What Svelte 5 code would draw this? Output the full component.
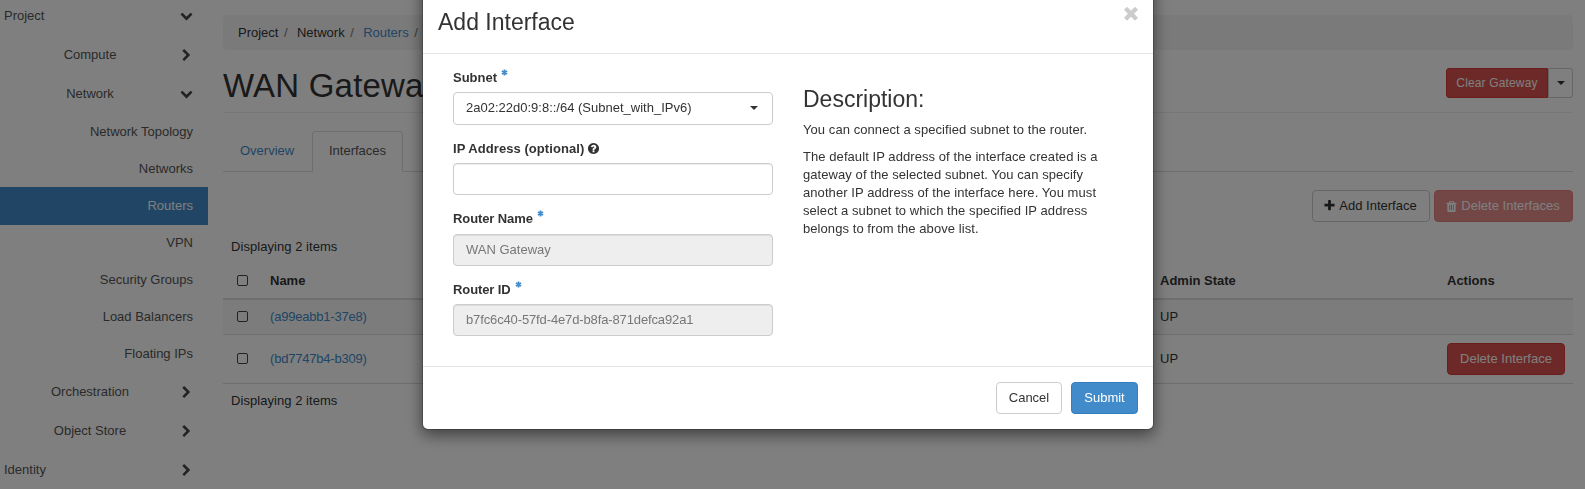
<script>
  const icons = {
    down: 'M1683 808l-742 741q-19 19-45 19t-45-19l-742-741q-19-19-19-45.5t19-45.5l166-165q19-19 45-19t45 19l531 531 531-531q19-19 45-19t45 19l166 165q19 19 19 45.5t-19 45.5z',
    right: 'M1363 877l-742 742q-19 19-45 19t-45-19l-166-166q-19-19-19-45t19-45l531-531-531-531q-19-19-19-45t19-45l166-166q19-19 45-19t45 19l742 742q19 19 19 45t-19 45z',
    times: 'M1490 1322q0 40-28 68l-136 136q-28 28-68 28t-68-28l-294-294-294 294q-28 28-68 28t-68-28l-136-136q-28-28-28-68t28-68l294-294-294-294q-28-28-28-68t28-68l136-136q28-28 68-28t68 28l294 294 294-294q28-28 68-28t68 28l136 136q28 28 28 68t-28 68l-294 294 294 294q28 28 28 68z',
    plus: 'M1600 736v192q0 40-28 68t-68 28h-416v416q0 40-28 68t-68 28h-192q-40 0-68-28t-28-68v-416h-416q-40 0-68-28t-28-68v-192q0-40 28-68t68-28h416v-416q0-40 28-68t68-28h192q40 0 68 28t28 68v416h416q40 0 68 28t28 68z',
    trash: 'M704 1376v-704q0-14-9-23t-23-9h-64q-14 0-23 9t-9 23v704q0 14 9 23t23 9h64q14 0 23-9t9-23zm256 0v-704q0-14-9-23t-23-9h-64q-14 0-23 9t-9 23v704q0 14 9 23t23 9h64q14 0 23-9t9-23zm256 0v-704q0-14-9-23t-23-9h-64q-14 0-23 9t-9 23v704q0 14 9 23t23 9h64q14 0 23-9t9-23zm-544-992h448l-48-117q-7-9-17-11h-317q-10 2-17 11zm928 32v64q0 14-9 23t-23 9h-96v948q0 83-47 143.5t-113 60.5h-832q-66 0-113-58.5t-47-141.5v-952h-96q-14 0-23-9t-9-23v-64q0-14 9-23t23-9h309l70-167q15-37 54-63t79-26h320q40 0 79 26t54 63l70 167h309q14 0 23 9t9 23z',
    help: 'M1024 1376v-192q0-14-9-23t-23-9h-192q-14 0-23 9t-9 23v192q0 14 9 23t23 9h192q14 0 23-9t9-23zm256-672q0-88-55.5-163t-138.5-116-170-41q-243 0-371 213-15 24 8 42l132 100q7 6 19 6 16 0 25-12 53-68 86-92 34-24 86-24 48 0 85.5 26t37.5 59q0 38-20 61t-68 45q-63 28-115.5 86.5t-52.5 125.5v36q0 14 9 23t23 9h192q14 0 23-9t9-23q0-19 21.5-49.5t54.5-49.5q32-18 49-28.5t46-35 44.5-48 28-60.5 12.5-81zm384 192q0 209-103 385.5t-279.5 279.5-385.5 103-385.5-103-279.5-279.5-103-385.5 103-385.5 279.5-279.5 385.5-103 385.5 103 279.5 279.5 103 385.5z'
  };

  const nav = [
    { label: 'Project', level: 1, icon: 'down' },
    { label: 'Compute', level: 2, icon: 'right' },
    { label: 'Network', level: 2, icon: 'down' },
    { label: 'Network Topology', level: 3 },
    { label: 'Networks', level: 3 },
    { label: 'Routers', level: 3, active: true },
    { label: 'VPN', level: 3 },
    { label: 'Security Groups', level: 3 },
    { label: 'Load Balancers', level: 3 },
    { label: 'Floating IPs', level: 3 },
    { label: 'Orchestration', level: 2, icon: 'right' },
    { label: 'Object Store', level: 2, icon: 'right' },
    { label: 'Identity', level: 1, icon: 'right' }
  ];

  const rows = [
    { name: '(a99eabb1-37e8)', state: 'UP', removable: false },
    { name: '(bd7747b4-b309)', state: 'UP', removable: true }
  ];
</script>

{#snippet icon(name, size = 13)}
  <svg class="icon {name}" width={size} height={size} viewBox="0 0 1792 1792" aria-hidden="true"><path d={icons[name]} /></svg>
{/snippet}

{#snippet required()}
  <svg class="required" width="7" height="7" viewBox="0 0 7 7" aria-hidden="true">
    <path d="M3.5 .5v6M.9 2l5.2 3M6.1 2L.9 5" />
  </svg>
{/snippet}

<div class="app">
  <nav class="sidebar">
    {#each nav as item}
      <div class="item level{item.level}" class:active={item.active}>
        <span class="label">{item.label}</span>
        {#if item.icon}<span class="chevron">{@render icon(item.icon)}</span>{/if}
      </div>
    {/each}
  </nav>

  <main>
    <div class="breadcrumb">
      <span>Project</span><i>/</i><span>Network</span><i>/</i><a href="#routers">Routers</a><i>/</i>
    </div>
    <header>
      <h1>WAN Gateway</h1>
      <div class="split">
        <button class="btn danger small">Clear Gateway</button>
        <button class="btn small toggle" aria-label="More"><span class="caret"></span></button>
      </div>
    </header>
    <div class="tabs">
      <a class="tab" href="#overview">Overview</a>
      <span class="tab current">Interfaces</span>
    </div>
    <div class="tools">
      <button class="btn add">{@render icon('plus')} Add Interface</button>
      <button class="btn danger disabled">{@render icon('trash')} Delete Interfaces</button>
    </div>
    <div class="count">Displaying 2 items</div>
    <div class="row head">
      <span class="check"><i></i></span><b>Name</b><b>Admin State</b><b>Actions</b>
    </div>
    {#each rows as row, n}
      <div class="row" class:striped={n === 0}>
        <span class="check"><i></i></span>
        <a class="port" href="#port">{row.name}</a>
        <span>{row.state}</span>
        <span>{#if row.removable}<button class="btn danger remove">Delete Interface</button>{/if}</span>
      </div>
    {/each}
    <div class="count foot">Displaying 2 items</div>
  </main>
</div>

<div class="backdrop">
  <div class="modal">
    <div class="modal-header">
      <h3>Add Interface</h3>
      <span class="close">{@render icon('times', 20)}</span>
    </div>
    <div class="modal-body">
      <div class="form">
        <div class="label-row">Subnet {@render required()}</div>
        <div class="field select"><span>2a02:22d0:9:8::/64 (Subnet_with_IPv6)</span><span class="caret"></span></div>
        <div class="label-row ip">IP Address (optional) {@render icon('help')}</div>
        <div class="field"></div>
        <div class="label-row tight">Router Name {@render required()}</div>
        <div class="field readonly">WAN Gateway</div>
        <div class="label-row tight">Router ID {@render required()}</div>
        <div class="field readonly uuid">b7fc6c40-57fd-4e7d-b8fa-871defca92a1</div>
      </div>
      <div class="description">
        <h3>Description:</h3>
        <p>You can connect a specified subnet to the router.</p>
        <p>
          The default IP address of the interface created is a<br />
          gateway of the selected subnet. You can specify<br />
          another IP address of the interface here. You must<br />
          select a subnet to which the specified IP address<br />
          belongs to from the above list.
        </p>
      </div>
    </div>
    <div class="modal-footer">
      <button class="btn cancel">Cancel</button>
      <button class="btn primary">Submit</button>
    </div>
  </div>
</div>

<style>
  :global(body) {
    overflow: hidden;
    background: #fff;
  }
  :global(*) {
    box-sizing: border-box;
  }
  .app,
  .backdrop {
    font: 13px/18px 'Liberation Sans', Arial, sans-serif;
    color: #333;
  }
  .app {
    display: flex;
    height: 489px;
    overflow: hidden;
  }
  a {
    color: #428bca;
    text-decoration: none;
  }
  .icon {
    fill: currentColor;
    flex: none;
  }

  .sidebar {
    width: 208px;
    margin-top: -4px;
    flex: none;
    color: #555;
  }
  .item {
    display: flex;
    align-items: center;
    height: 39px;
    padding-left: 4px;
  }
  .item .label {
    flex: 1;
  }
  .level2 {
    padding-left: 0;
  }
  .level2 .label {
    text-align: center;
  }
  .level3 {
    height: 37px;
    padding-right: 15px;
  }
  .level3 .label {
    text-align: right;
  }
  .active {
    height: 38px;
    margin-bottom: -1px;
    padding-bottom: 1px;
    background: #428bca;
    color: #fff;
  }
  .chevron {
    display: flex;
    width: 28px;
    color: #444;
  }
  .chevron :global(.right) {
    margin-top: 1px;
  }

  main {
    flex: none;
    width: 1350px;
    margin: 15px 0 0 15px;
  }
  .breadcrumb {
    display: flex;
    align-items: center;
    height: 35px;
    padding: 0 15px;
    border-radius: 4px;
    background: #f5f5f5;
  }
  .breadcrumb i {
    width: 18.5px;
    padding-left: 5.5px;
    font-style: normal;
    color: #777;
  }
  header {
    display: flex;
    justify-content: space-between;
    height: 63px;
    padding-top: 18px;
    border-bottom: 1px solid #eee;
  }
  h1 {
    margin: 0;
    font-size: 33px;
    line-height: 36px;
    font-weight: 400;
    letter-spacing: 0.2px;
  }
  .split {
    display: flex;
  }
  .btn {
    display: inline-flex;
    align-items: center;
    justify-content: center;
    gap: 3px;
    height: 32px;
    padding: 0 12px;
    border: 1px solid #ccc;
    border-radius: 4px;
    background: #fff;
    color: #333;
    font: inherit;
    white-space: nowrap;
  }
  .small {
    width: 102px;
    height: 30px;
    padding: 0;
    border-radius: 3px 0 0 3px;
    font-size: 12px;
    letter-spacing: 0.15px;
  }
  .toggle {
    width: 25px;
    border-radius: 0 3px 3px 0;
  }
  .danger {
    border-color: #d43f3a;
    background: #d9534f;
    color: #fff;
  }
  .primary {
    width: 67px;
    border-color: #357ebd;
    background: #428bca;
    color: #fff;
  }
  .cancel {
    width: 66px;
  }
  .disabled {
    width: 139px;
    padding: 0 2px 0 0;
    opacity: 0.65;
  }
  .add {
    width: 118px;
    padding: 0 2px 0 0;
  }
  .add :global(.plus) {
    margin-top: -1px;
  }
  .remove {
    width: 118px;
  }
  .caret {
    border: 4px solid transparent;
    border-top-color: currentColor;
    border-bottom: 0;
  }

  .tabs {
    display: flex;
    height: 41px;
    margin-top: 18px;
    border-bottom: 1px solid #ddd;
  }
  .tab {
    width: 89px;
    height: 41px;
    padding: 11px 0 0 17px;
  }
  .current {
    width: 91px;
    border: 1px solid #ddd;
    border-bottom-color: #fff;
    border-radius: 4px 4px 0 0;
    padding: 10px 0 0 16px;
    background: #fff;
    color: #555;
  }
  .tools {
    display: flex;
    justify-content: flex-end;
    gap: 4px;
    margin-top: 18px;
  }
  .count {
    padding: 16px 8px 8px;
    letter-spacing: 0.05px;
  }
  .row {
    display: grid;
    grid-template-columns: 47px 890px 287px 1fr;
    align-items: center;
    min-height: 34px;
    border-top: 1px solid #ddd;
  }
  .row:not(.head):not(.striped) {
    height: 49px;
  }
  .row.head {
    height: 36px;
    border-top: 0;
    border-bottom: 2px solid #ddd;
  }
  .striped {
    border-top: 0;
    background: #f9f9f9;
  }
  .port {
    letter-spacing: -0.2px;
  }
  .check {
    padding-left: 14px;
  }
  .check i {
    display: block;
    width: 11px;
    height: 11px;
    margin-top: -1px;
    border: 1px solid #444;
    border-radius: 2px;
  }
  .foot {
    padding-top: 8px;
    border-top: 1px solid #ddd;
  }

  .backdrop {
    position: fixed;
    inset: 0;
    background: rgba(0, 0, 0, 0.5);
  }
  .modal {
    width: 732px;
    height: 460px;
    margin: -30px 0 0 422px;
    border: 1px solid rgba(0, 0, 0, 0.2);
    border-radius: 6px;
    background: #fff;
    background-clip: padding-box;
    box-shadow: 0 5px 15px rgba(0, 0, 0, 0.5);
  }
  .modal-header {
    display: flex;
    justify-content: space-between;
    height: 83px;
    padding: 39px 12px 0 15px;
    border-bottom: 1px solid #e5e5e5;
  }
  h3 {
    margin: 0;
    font-size: 23px;
    line-height: 25px;
    font-weight: 400;
  }
  .close {
    color: #ccc;
    display: flex;
    margin-top: -7px;
  }
  .modal-body {
    display: flex;
    height: 312px;
    padding: 15px 30px;
  }
  .form {
    width: 320px;
  }
  .label-row {
    display: flex;
    height: 18.5px;
    margin-bottom: 5px;
    font-weight: 700;
  }
  .label-row:first-child {
    height: 18px;
  }
  .tight {
    letter-spacing: -0.1px;
  }
  .ip {
    align-items: center;
    gap: 3px;
    letter-spacing: 0.06px;
  }
  .required {
    margin: 0 0 0 4px;
    stroke: #428bca;
    stroke-width: 1.8;
  }
  .field {
    display: flex;
    align-items: center;
    height: 32px;
    margin-bottom: 15px;
    padding: 0 12px;
    border: 1px solid #ccc;
    border-radius: 4px;
    box-shadow: inset 0 1px 1px rgba(0, 0, 0, 0.075);
  }
  .select {
    justify-content: space-between;
    height: 32.5px;
    padding: 0 14px 1px 12px;
    box-shadow: none;
  }
  .readonly {
    background: #eee;
    color: #777;
  }
  .uuid {
    letter-spacing: -0.13px;
  }
  .description {
    margin: 18px 0 0 30px;
    white-space: nowrap;
    letter-spacing: 0.07px;
  }
  .description h3 {
    margin-bottom: 9px;
    letter-spacing: 0;
  }
  p {
    margin: 0 0 9px;
  }
  .modal-footer {
    display: flex;
    justify-content: flex-end;
    gap: 9px;
    padding: 15px;
    border-top: 1px solid #e5e5e5;
  }
</style>
